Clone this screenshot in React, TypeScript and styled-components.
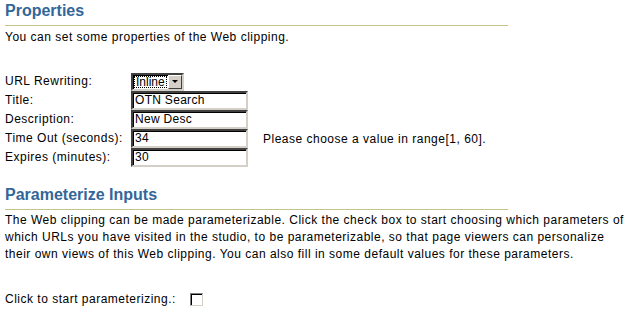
import React from "react";
import styled, { createGlobalStyle } from "styled-components";

const Global = createGlobalStyle`
  html, body { margin: 0; padding: 0; background: #ffffff; }
  body { font-family: "Liberation Sans", Arial, sans-serif; font-size: 12px; color: #000; }
`;

const Page = styled.div`
  padding: 0 5px;
  width: 621px;
`;

const Heading = styled.h2<{ $top: number }>`
  margin: ${(p) => p.$top}px 0 0 0;
  width: 503px;
  font-family: "Liberation Sans", Arial, sans-serif;
  font-size: 16px;
  font-weight: bold;
  color: #336699;
  line-height: 20px;
  padding-bottom: 4px;
  border-bottom: 1px solid #c4c48a;
`;

const Text = styled.p<{ $top?: number }>`
  margin: ${(p) => p.$top ?? 0}px 0 0 0;
  font-size: 12px;
  line-height: 17px;
  letter-spacing: 0.5px;
`;

const Form = styled.div`
  margin-top: 26px;
  display: grid;
  grid-template-columns: 126px 117px auto;
  grid-auto-rows: 19px;
  align-items: center;
`;

const Label = styled.span`
  font-size: 12px;
  line-height: 19px;
  letter-spacing: 0.5px;
  white-space: nowrap;
`;

const Cell = styled.div`
  display: flex;
  align-items: center;
  height: 19px;
`;

const Field = styled.div`
  box-sizing: border-box;
  width: 117px;
  height: 19px;
  border-style: solid;
  border-width: 2px;
  border-color: #404040 #d4d0c8 #d4d0c8 #404040;
  box-shadow: inset 1px 1px 0 #000;
  background: #fff;
  font-size: 12px;
  line-height: 15px;
  padding-left: 2px;
  letter-spacing: 0.3px;
  white-space: nowrap;
  overflow: hidden;
`;

const Select = styled.div`
  box-sizing: border-box;
  width: 53px;
  height: 18px;
  border-style: solid;
  border-width: 2px;
  border-color: #404040 #d4d0c8 #d4d0c8 #404040;
  box-shadow: inset 1px 1px 0 #000;
  background: #fff;
  display: flex;
  align-items: stretch;
`;

const SelectValue = styled.span`
  flex: 1;
  margin: 1px;
  outline: 1px dotted #000;
  outline-offset: -1px;
  font-size: 12px;
  line-height: 12px;
  padding-left: 2px;
`;

const Arrow = styled.span`
  width: 14px;
  box-sizing: border-box;
  background: #d4d0c8;
  border-style: solid;
  border-width: 1px;
  border-color: #fff #404040 #404040 #fff;
  display: flex;
  align-items: center;
  justify-content: center;
  &::after {
    content: "";
    border-left: 3px solid transparent;
    border-right: 3px solid transparent;
    border-top: 3px solid #000;
  }
`;

const Hint = styled.span`
  padding-left: 15px;
  font-size: 12px;
  letter-spacing: 0.5px;
  white-space: nowrap;
`;

const CheckRow = styled.div`
  margin-top: 27px;
  display: flex;
  align-items: center;
  gap: 14px;
`;

const Box = styled.span`
  box-sizing: border-box;
  width: 13px;
  height: 13px;
  border-style: solid;
  border-width: 1px;
  border-color: #808080 #d4d0c8 #d4d0c8 #808080;
  box-shadow: inset 1px 1px 0 #000;
  background: #fff;
`;

const rows: { label: string; value: string; hint?: string }[] = [
  { label: "Title:", value: "OTN Search" },
  { label: "Description:", value: "New Desc" },
  { label: "Time Out (seconds):", value: "34", hint: "Please choose a value in range[1, 60]." },
  { label: "Expires (minutes):", value: "30" },
];

export default function App() {
  return (
    <>
      <Global />
      <Page>
        <Heading $top={1}>Properties</Heading>
        <Text $top={3}>You can set some properties of the Web clipping.</Text>
        <Form>
          <Label>URL Rewriting:</Label>
          <Cell>
            <Select>
              <SelectValue>Inline</SelectValue>
              <Arrow />
            </Select>
          </Cell>
          <span />
          {rows.map((r) => (
            <React.Fragment key={r.label}>
              <Label>{r.label}</Label>
              <Field>{r.value}</Field>
              {r.hint ? <Hint>{r.hint}</Hint> : <span />}
            </React.Fragment>
          ))}
        </Form>
        <Heading $top={18}>Parameterize Inputs</Heading>
        <Text $top={2}>
          The Web clipping can be made parameterizable. Click the check box to start choosing which parameters of
          which URLs you have visited in the studio, to be parameterizable, so that page viewers can personalize
          their own views of this Web clipping. You can also fill in some default values for these parameters.
        </Text>
        <CheckRow>
          <Label>Click to start parameterizing.:</Label>
          <Box />
        </CheckRow>
      </Page>
    </>
  );
}
